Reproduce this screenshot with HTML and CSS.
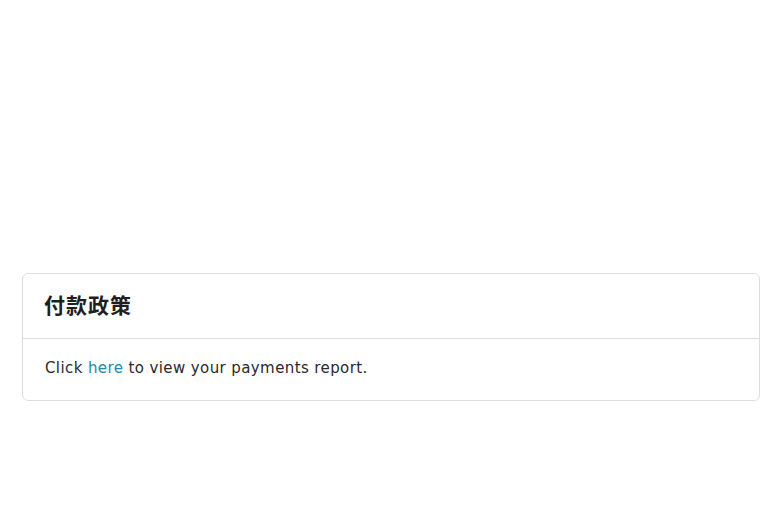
FILE: index.html
```html
<!DOCTYPE html>
<html lang="zh">
<head>
<meta charset="utf-8">
<title>付款政策</title>
<link rel="stylesheet" href="styles.css">
</head>
<body>
<main class="page">
  <section class="card">
    <header class="card-header">
      <h2 class="card-title">付款政策</h2>
    </header>
    <div class="card-body">
      <p class="card-text">Click <a class="link" href="#">here</a> to view your payments report.</p>
    </div>
  </section>
</main>
</body>
</html>
```

FILE: styles.css
```css
html, body {
  margin: 0;
  padding: 0;
  background: #ffffff;
}

body {
  font-family: "DejaVu Sans", Verdana, "Noto Sans CJK SC", sans-serif;
  color: #222222;
}

.page {
  padding: 273px 20px 0 22px;
}

.card {
  border: 1px solid #dcdedf;
  border-radius: 6px;
  background: #ffffff;
}

.card-header {
  height: 65px;
  box-sizing: border-box;
  display: flex;
  align-items: center;
  padding: 0 21px 3px;
  border-bottom: 1px solid #dcdedf;
}

.card-title {
  margin: 0;
  font-family: "Noto Sans CJK SC", "Liberation Sans", sans-serif;
  font-size: 21px;
  font-weight: 700;
  letter-spacing: 1px;
  line-height: 1;
  color: #1f1f1f;
}

.card-body {
  padding: 19px 22px 21px;
}

.card-text {
  margin: 0;
  font-size: 15px;
  letter-spacing: 0.4px;
  line-height: 21px;
  color: #2a2a2a;
}

.link {
  color: #1f8aa3;
  text-decoration: none;
}
```
